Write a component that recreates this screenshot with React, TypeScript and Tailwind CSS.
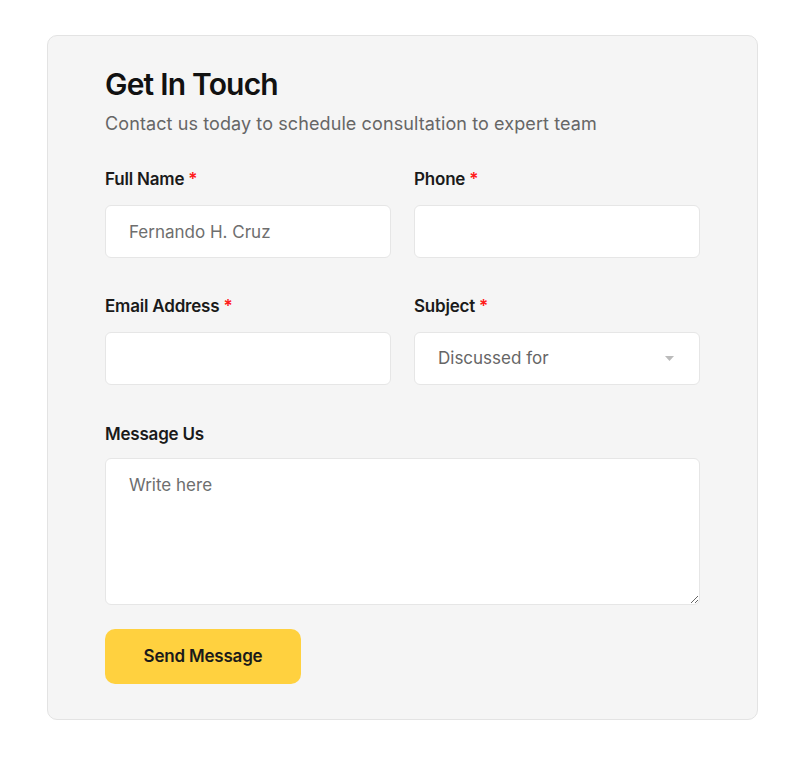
import React from 'react';

const Label = ({ text, required }: { text: string; required?: boolean }) => (
    <label className="block text-[17px] leading-6 font-semibold text-[#1a1a1a] mb-[14px] tracking-[-0.2px]">
        {text}
        {required && <span className="text-[#ff1a1a] ml-1">*</span>}
    </label>
);

const inputCls =
    'w-full h-[53px] rounded-md border border-[#e6e6e6] bg-white px-[23px] text-[17px] text-[#555] placeholder:text-[#6e6e6e] outline-none';

export default function App() {
    return (
        <div className="min-h-[758px] bg-white pt-[35px] px-[47px]" style={{ fontFamily: 'Inter, "Noto Sans", sans-serif' }}>
            <div className="w-[711px] rounded-[10px] border border-[#e3e3e3] bg-[#f5f5f5] px-[57px] pt-[30px] pb-[35px]">
                <h1 className="text-[30px] leading-9 font-semibold text-[#111] tracking-[-0.8px]">Get In Touch</h1>
                <p className="mt-[9px] text-[18px] leading-[26px] text-[#666] tracking-[0.1px]">
                    Contact us today to schedule consultation to expert team
                </p>

                <div className="mt-[30px] grid grid-cols-2 gap-x-[23px] gap-y-[36px]">
                    <div>
                        <Label text="Full Name" required />
                        <input className={inputCls} placeholder="Fernando H. Cruz" />
                    </div>
                    <div>
                        <Label text="Phone" required />
                        <input className={inputCls} />
                    </div>
                    <div>
                        <Label text="Email Address" required />
                        <input className={inputCls} />
                    </div>
                    <div>
                        <Label text="Subject" required />
                        <div className={inputCls + ' flex items-center justify-between'}>
                            <span className="text-[#666]">Discussed for</span>
                            <svg width="9" height="5" viewBox="0 0 9 5" className="mr-[2px]">
                                <path d="M0 0 L9 0 L4.5 5 Z" fill="#bbb" />
                            </svg>
                        </div>
                    </div>
                </div>

                <div className="mt-[37px]">
                    <label className="block text-[17px] leading-6 font-semibold text-[#1a1a1a] mb-[12px] tracking-[-0.2px]">
                        Message Us
                    </label>
                    <textarea
                        className="block w-full h-[147px] rounded-md border border-[#e6e6e6] bg-white px-[23px] py-[14px] text-[17px] text-[#555] placeholder:text-[#6e6e6e] outline-none"
                        placeholder="Write here"
                    />
                </div>

                <button className="mt-[24px] h-[55px] w-[196px] rounded-[10px] bg-[#ffd13f] text-[17px] font-semibold text-[#1a1a1a] tracking-[-0.2px]">
                    Send Message
                </button>
            </div>
        </div>
    );
}
